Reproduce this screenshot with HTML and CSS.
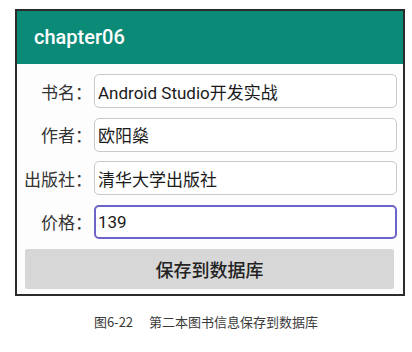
FILE: index.html
```html
<!DOCTYPE html>
<html lang="zh-CN">
<head>
  <meta charset="UTF-8" />
  <meta name="viewport" content="width=device-width, initial-scale=1.0" />
  <title>chapter06</title>
  <link rel="stylesheet" href="styles.css">
</head>
<body>
  <div class="phone">
    <header class="appbar">chapter06</header>
    <form class="form">
      <div class="row">
        <label>书名：</label>
        <input type="text" value="Android Studio开发实战">
      </div>
      <div class="row">
        <label>作者：</label>
        <input type="text" value="欧阳燊">
      </div>
      <div class="row">
        <label>出版社：</label>
        <input type="text" value="清华大学出版社">
      </div>
      <div class="row">
        <label>价格：</label>
        <input type="text" class="focused" value="139">
      </div>
      <button type="button" class="save">保存到数据库</button>
    </form>
  </div>
  <p class="caption">图6-22<span class="sep"></span>第二本图书信息保存到数据库</p>
</body>
</html>
```

FILE: styles.css
```css
body {
  margin: 0;
  background: #fff;
  font-family: Roboto, "Noto Sans CJK SC", sans-serif;
}
.phone {
  box-sizing: border-box;
  width: 390px;
  margin: 9px 0 0 15px;
  border: 2px solid #2b2b2b;
  background: #fdfdfd;
}
.appbar {
  height: 53px;
  line-height: 52px;
  padding-left: 17px;
  background: #0b8a78;
  color: #fff;
  font-size: 20px;
  font-weight: 500;
}
.form {
  padding: 10px 6px 5px 0;
}
.row {
  display: grid;
  grid-template-columns: 75px 1fr;
  column-gap: 2px;
  align-items: center;
  margin-bottom: 9.5px;
}
.row label {
  text-align: right;
  font-size: 17px;
  color: #333;
  white-space: nowrap;
}
.row input {
  box-sizing: border-box;
  height: 34px;
  width: 100%;
  padding: 0 3px;
  border: 1px solid #c9c9c9;
  border-radius: 5px;
  background: #fff;
  font-family: Roboto, "Noto Sans CJK SC", sans-serif;
  font-size: 17px;
  color: #1a1a1a;
}
.row input.focused {
  border: 2px solid #6e63c9;
  padding: 0 2px;
  outline: none;
}
.save {
  display: block;
  box-sizing: border-box;
  width: calc(100% - 11px);
  height: 40px;
  margin: 10px 3px 0 8px;
  border: none;
  border-radius: 2px;
  background: #d7d7d7;
  font-family: Roboto, "Noto Sans CJK SC", sans-serif;
  font-size: 18px;
  font-weight: 500;
  color: #222;
}
.caption {
  margin: 16px 0 0;
  text-align: center;
  font-family: "Noto Sans CJK SC", sans-serif;
  font-size: 13px;
  color: #3a3a3a;
}
.sep {
  display: inline-block;
  width: 16px;
}
```
